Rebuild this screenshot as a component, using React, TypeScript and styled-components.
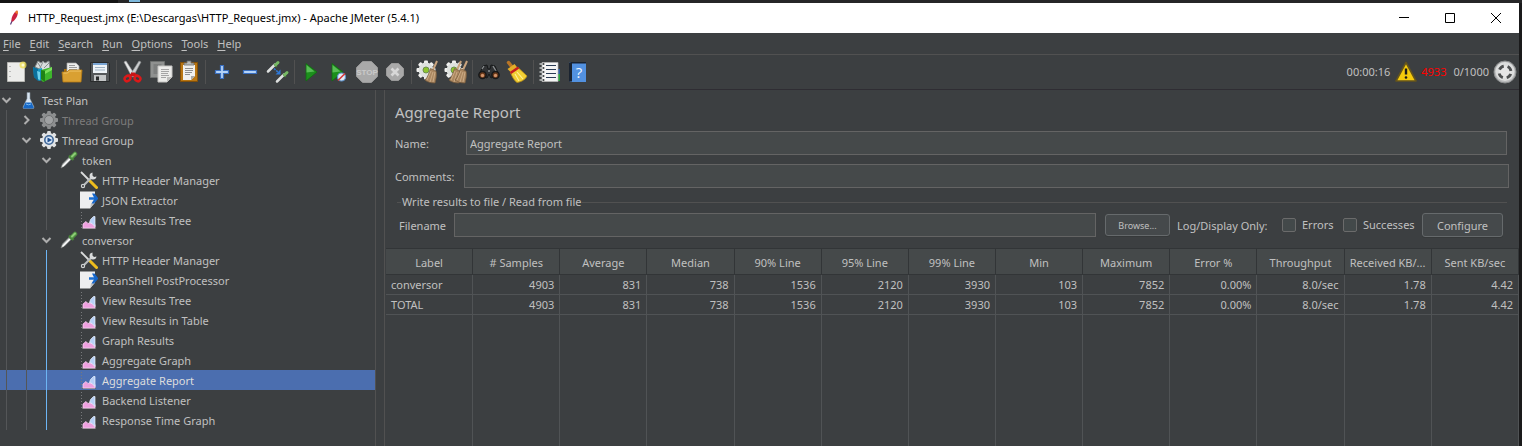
import React from "react";
import styled, { createGlobalStyle } from "styled-components";

const GlobalStyle = createGlobalStyle`
  *, *::before, *::after { box-sizing: border-box; }
  body { margin: 0; background: #1a1a1b; }
  body, button, input, table { font-family: "Noto Sans", "Open Sans", sans-serif; font-size: 11px; }
  button, input { color: inherit; }
`;

const Desktop = styled.div`
  display: flex;
  flex-direction: column;
  min-height: 100vh;
  padding-right: 3px;
  color: #c0c0c0;
  line-height: 16px;
`;

const Backdrop = styled.div`
  display: flex;
  height: 3px;
  margin-right: -3px;
  background: #262627;
`;
const BackdropDark = styled.div`
  width: 118px;
  margin-right: 11px;
  background: #141414;
`;
const BackdropIcon = styled.div`
  width: 11px;
  height: 2px;
  background: #7db8dc;
`;

const Window = styled.div`
  flex: 1;
  display: flex;
  flex-direction: column;
  background: #3c3f41;
`;

const TitleBar = styled.header`
  display: flex;
  align-items: center;
  height: 30px;
  padding-left: 6px;
  gap: 4px;
  background: #ffffff;
  color: #000000;
`;
const WindowTitle = styled.div`
  flex: 1;
  white-space: nowrap;
`;
const WindowControls = styled.div`
  display: flex;
`;
const WindowButton = styled.button`
  display: flex;
  align-items: center;
  justify-content: center;
  width: 46px;
  height: 30px;
  padding: 0;
  border: 0;
  background: none;
`;

const MenuBar = styled.nav`
  display: flex;
  align-items: center;
  height: 22px;
  gap: 9px;
  padding: 0 3px;
  border-bottom: 1px solid #515151;
`;
const MenuItem = styled.button`
  padding: 0;
  border: 0;
  background: none;
  line-height: 16px;
  u { text-underline-offset: 2px; }
`;

const Toolbar = styled.div`
  display: flex;
  align-items: center;
  height: 35px;
  padding: 0 2px;
  border-bottom: 1px solid #2f2d33;
`;
const ToolButton = styled.button`
  display: flex;
  justify-content: center;
  width: 28px;
  padding: 0;
  border: 0;
  background: none;
`;
const Separator = styled.div`
  width: 1px;
  height: 24px;
  margin: 0 2px;
  background: #515151;
`;
const Status = styled.div`
  display: flex;
  align-items: center;
  gap: 4px;
  margin-left: auto;
`;
const ErrorCount = styled.span`
  color: #ff0000;
  margin: 0 3px 0 -1px;
`;

const Workspace = styled.div`
  flex: 1;
  display: flex;
`;

const Tree = styled.div`
  width: 376px;
  flex: none;
  border-right: 1px solid #515151;
`;
const TreeRow = styled.div<{ $selected?: boolean; $disabled?: boolean }>`
  display: flex;
  align-items: center;
  height: 20px;
  background: ${(p) => (p.$selected ? "#4b6eaf" : "transparent")};
  color: ${(p) => (p.$disabled ? "#7c7c7c" : p.$selected ? "#dddddd" : "#c0c0c0")};
`;
const TreeLabel = styled.span`
  padding-top: 1px;
`;
const Guide = styled.span<{ $active?: boolean }>`
  align-self: stretch;
  width: 14px;
  margin-left: 6px;
  border-left: 1px solid ${(p) => (p.$active ? "#6db5f5" : "#545658")};
`;
const Twisty = styled.span`
  display: flex;
  width: 20px;
  padding-left: 1px;
`;
const TreeIcon = styled.span`
  display: flex;
  width: 22px;
`;

const Divider = styled.div`
  width: 9px;
  flex: none;
  border-right: 1px solid #515151;
`;

const Panel = styled.main`
  flex: 1;
  min-width: 0;
  display: flex;
  flex-direction: column;
`;
const Heading = styled.h1`
  margin: 0;
  padding: 12px 10px 9px;
  font-size: 15px;
  line-height: 20px;
  font-weight: 400;
`;
const Field = styled.div<{ $inset: number }>`
  display: flex;
  align-items: center;
  height: 24px;
  margin: 0 ${(p) => p.$inset}px 9px 10px;
`;
const FieldLabel = styled.label<{ $width: number }>`
  flex: none;
  width: ${(p) => p.$width}px;
  padding-top: 1px;
`;
const TextInput = styled.input`
  flex: 1;
  min-width: 0;
  height: 24px;
  padding: 1px 3px 0;
  border: 1px solid #646464;
  border-radius: 0;
  background: #45494a;
  outline: 0;
`;
const FileGroup = styled.fieldset`
  min-width: 0;
  margin: -3px 12px 0;
  padding: 3px 4px 11px 2px;
  border: 0;
  border-top: 1px solid #515151;
`;
const FileLegend = styled.legend`
  margin-left: 2px;
  padding: 0 1px;
`;
const FileRow = styled.div`
  display: flex;
  align-items: center;
`;
const PushButton = styled.button<{ $small?: boolean }>`
  flex: none;
  width: ${(p) => (p.$small ? 65 : 81)}px;
  height: ${(p) => (p.$small ? 22 : 24)}px;
  margin-left: ${(p) => (p.$small ? 9 : 0)}px;
  padding: 1px 0 0;
  border: 1px solid #666a6c;
  border-radius: 3px;
  background: #45494b;
  box-shadow: 0 1px 0 #36393a;
  font-size: ${(p) => (p.$small ? 9 : 11)}px;
`;
const Caption = styled.span`
  flex: none;
  width: 94px;
  margin: 0 11px 0 7px;
  padding-top: 1px;
  white-space: nowrap;
`;
const CheckLabel = styled.label<{ $width: number }>`
  flex: none;
  display: flex;
  align-items: center;
  width: ${(p) => p.$width}px;
  gap: 6px;
`;
const CheckBox = styled.input`
  appearance: none;
  width: 14px;
  height: 14px;
  margin: 0;
  border: 1px solid #6b6b6b;
  border-radius: 2px;
  background: #43494a;
`;

const TableArea = styled.div`
  flex: 1;
  display: grid;
  padding-left: 1px;
`;
const Table = styled.table`
  width: 100%;
  table-layout: fixed;
  border-collapse: separate;
  border-spacing: 0;
  border-top: 1px solid #323537;
`;
const HeadCell = styled.th`
  height: 26px;
  padding: 2px 3px 0;
  white-space: nowrap;
  font-weight: 400;
  background: #45494a;
  border-right: 1px solid #323537;
  border-bottom: 1px solid #323537;
`;
const Cell = styled.td`
  height: 20px;
  padding: 1px 5px 0;
  text-align: right;
  border-right: 1px solid #505355;
  border-bottom: 1px solid #505355;
  &:first-child { text-align: left; }
`;
const FillCell = styled.td`
  border-right: 1px solid #505355;
`;

const Svg = ({ size = 24, children }: { size?: number; children: React.ReactNode }) => (
  <svg width={size} height={size} viewBox={`0 0 ${size} ${size}`} aria-hidden="true">
    {children}
  </svg>
);

const Page = ({ x, y, dark }: { x: number; y: number; dark?: boolean }) => (
  <g transform={`translate(${x} ${y})`}>
    <path d="M0 0h14v11l-5 5H0z" fill={dark ? "#8f9190" : "#ececea"} stroke={dark ? "#6d706f" : "#c4c4c2"} />
    <path d="M9 16v-5h5z" fill={dark ? "#777" : "#bdbdbb"} />
    <path d="M3 3.5h8M3 5.5h8M3 7.5h7M3 9.5h8M3 11.5h5" stroke={dark ? "#6a6c6c" : "#a4a4a4"} />
  </g>
);

const Gear = ({ x, y, r, fill, tooth }: { x: number; y: number; r: number; fill: string; tooth: string }) => (
  <g transform={`translate(${x} ${y})`}>
    {[0, 45, 90, 135, 180, 225, 270, 315].map((a) => (
      <rect key={a} x={-r * 0.21} y={-r} width={r * 0.42} height={r / 2} rx="1" fill={tooth} transform={`rotate(${a})`} />
    ))}
    <circle r={r * 0.78} fill={fill} />
  </g>
);

const Broom = ({ x }: { x: number }) => (
  <g transform={`translate(${x} 0)`}>
    <path d="M21 1L17 10" stroke="#c9a47e" strokeWidth="2" />
    <path d="M14.500 8.500l5.500 2.500c1 4 0 8-1 12-4 0-8-1-10-3 3-3 4-7 5.500-11.500z" fill="#ab8760" stroke="#765a3c" strokeWidth=".7" />
    <path d="M15 11l-4 9M17 12l-3 10M19 12l-2 10" stroke="#d3b48e" strokeWidth=".8" />
  </g>
);

const Pipette = () => (
  <>
    <path d="M1 17l1.500-4 7-7 2 2-7 7z" fill="#c8cccb" stroke="#858a88" strokeWidth=".7" />
    <path d="M2.500 15.500L10 8" stroke="#fff" strokeWidth="1.200" />
    <path d="M9 4.500l4.500 4.500" stroke="#467c39" strokeWidth="2.400" />
    <path d="M11.500 6.500l3.500-3.500" stroke="#4d8c3f" strokeWidth="4.500" strokeLinecap="round" />
    <path d="M12 5.500L15 2.500" stroke="#8dcc77" strokeWidth="2" strokeLinecap="round" />
  </>
);

const Octagon = ({ r }: { r: number }) => (
  <path
    transform="translate(12 12)"
    d={`M${-r * 0.42} ${-r}h${r * 0.84}L${r} ${-r * 0.42}v${r * 0.84}L${r * 0.42} ${r}h${-r * 0.84}L${-r} ${r * 0.42}v${-r * 0.84}z`}
    fill="#a9a9a9"
    stroke="#999"
  />
);

const icons: Record<string, React.ReactNode> = {
  new: (
    <>
      <path d="M3.500 2.500h17v19h-17z" fill="#ececea" stroke="#b8b8b4" />
      <path d="M6 6v1M6 11v1M6 16v1" stroke="#aaa" strokeWidth="1.500" />
      <circle cx="19" cy="5" r="3.500" fill="#f0e04f" opacity=".75" />
      <circle cx="19" cy="5" r="1.500" fill="#fffbd0" />
    </>
  ),
  templates: (
    <>
      <path d="M3 7l3-6 3 2 2-2 2 2 4-2 1 7-6 3z" fill="#d9dddd" stroke="#85898a" />
      <path d="M6 3l3 5M11 2l-3 6M17 3l-5 5" stroke="#8b8f90" />
      <path d="M1 7l5 2 4-1v12l-3 1-5-4z" fill="#1698c4" />
      <path d="M1 7l5 2v12l-4-4z" fill="#0a6f9c" />
      <path d="M5 11l3 1v8l-2-1z" fill="#6dd0ed" />
      <path d="M9 10l11-3v11l-9 4-2-2z" fill="#3db62c" />
      <path d="M9 10l4 1v11l-4-3z" fill="#1f8215" />
      <path d="M13 11l7-4v3l-7 4z" fill="#7bdf5c" />
    </>
  ),
  open: (
    <>
      <path d="M4 9h16v11H4z" fill="#a56d0c" />
      <path d="M7 3h9l3 3v9H7z" fill="#eeeeec" stroke="#a8a8a8" strokeWidth=".7" />
      <path d="M9 5.500h6M9 7.500h8M9 9.500h8" stroke="#999" />
      <path d="M2 12h5l2-2h13l-1 12H3z" fill="#d9a032" stroke="#b77b12" strokeWidth=".8" />
      <path d="M3.500 13h4l2-2H21" stroke="#f0c468" fill="none" />
    </>
  ),
  save: (
    <>
      <path d="M2.500 2.500h18l1 1v18h-19z" fill="#55585a" stroke="#292b2c" />
      <path d="M5 3h14v10H5z" fill="#eef3f7" />
      <path d="M5 3h14v2H5z" fill="#79a5d4" />
      <path d="M7 7.500h10M7 10h10" stroke="#9eb1c2" />
      <path d="M6 15h12v6H6z" fill="#c4c6c7" />
      <path d="M8 16.500h3v4H8z" fill="#292b2c" />
    </>
  ),
  cut: (
    <>
      <path d="M3 2l2-1 9 14-3 2z" fill="#e5e6e6" stroke="#9a9c9d" strokeWidth=".6" />
      <path d="M20 2l-2-1-9 14 3 2z" fill="#cbcdce" stroke="#8c8e90" strokeWidth=".6" />
      <path d="M10 14l3 0 2 2M13 14l-5 2" stroke="#c91515" strokeWidth="3" />
      <ellipse cx="6.500" cy="18.500" rx="3" ry="2.500" fill="none" stroke="#dc1919" strokeWidth="2.500" transform="rotate(-35 6.500 18.500)" />
      <ellipse cx="16.500" cy="18.500" rx="3" ry="2.500" fill="none" stroke="#dc1919" strokeWidth="2.500" transform="rotate(35 16.500 18.500)" />
    </>
  ),
  copy: (
    <>
      <Page x={1.5} y={1.5} dark />
      <Page x={9} y={6} />
    </>
  ),
  paste: (
    <>
      <path d="M3.500 2.500h17v19h-17z" fill="#b97612" stroke="#82500a" />
      <path d="M6 5h12v11l-4 4H6z" fill="#f0f0ee" />
      <path d="M14 20v-4h4z" fill="#aaa" />
      <path d="M8 8.500h8M8 10.500h8M8 12.500h7M8 14.500h5" stroke="#8f8f8f" />
      <path d="M7 5V3h3V1h4v2h3v2z" fill="#b9bbb8" stroke="#686b69" strokeWidth=".8" />
    </>
  ),
  plus: <path d="M10.500 5.500h3v5h5v3h-5v5h-3v-5h-5v-3h5z" fill="#b4d3f7" stroke="#3a6fc0" strokeWidth="1.200" />,
  minus: <path d="M5.500 10.500h13v3h-13z" fill="#b4d3f7" stroke="#3a6fc0" strokeWidth="1.200" />,
  toggle: (
    <>
      {[[1, 0], [10, 10]].map(([x, y]) => (
        <g key={x} transform={`translate(${x} ${y})`}>
          <path d="M1 11.500l7-7" stroke="#dee1e0" strokeWidth="2.500" strokeLinecap="round" />
          <path d="M7 4l3 3" stroke="#436e36" strokeWidth="1.500" />
          <path d="M8.500 5l2.500-2.500" stroke="#76b864" strokeWidth="3" strokeLinecap="round" />
        </g>
      ))}
      <path d="M8 8.500l4.500 4" stroke="#2d78d8" strokeWidth="1.600" strokeDasharray="2 1" />
      <path d="M14.500 14.500v-5L9.500 14.500z" fill="#2d78d8" />
    </>
  ),
  play: (
    <>
      <path d="M7 3.500l11 8.500-11 9z" fill="#1c8f1c" stroke="#126912" strokeWidth=".8" />
      <path d="M7.500 5l8 6.500-8 1z" fill="#58bd55" />
    </>
  ),
  playNow: (
    <>
      <path d="M5 3.500L16 12 5 21z" fill="#1c8f1c" stroke="#126912" strokeWidth=".8" />
      <path d="M5.500 5l8 6.500-8 1z" fill="#58bd55" />
      <circle cx="14.500" cy="17" r="4" fill="#e3edf7" stroke="#5d91c9" strokeWidth="1.200" />
      <path d="M11 20.500l7-7" stroke="#d63939" strokeWidth="1.600" />
    </>
  ),
  stop: (
    <>
      <Octagon r={10.5} />
      <text x="12" y="15" fontSize="8" fontWeight="700" textAnchor="middle" fill="#c9c9c9" fontFamily="Liberation Sans, sans-serif">STOP</text>
    </>
  ),
  shutdown: (
    <>
      <Octagon r={8.5} />
      <path d="M8.500 8.500l7 7M15.500 8.500l-7 7" stroke="#d8d8d8" strokeWidth="2.600" />
    </>
  ),
  clear: (
    <>
      <Gear x={10} y={10} r={9.5} fill="#dfe2df" tooth="#f2f2f0" />
      <circle cx="10" cy="10" r="3" fill="#8fc52f" stroke="#6d8f4f" />
      <Broom x={0} />
    </>
  ),
  clearAll: (
    <>
      <Gear x={10} y={10} r={9.5} fill="#dfe2df" tooth="#f2f2f0" />
      <circle cx="10" cy="10" r="3" fill="#8fc52f" stroke="#6d8f4f" />
      <Broom x={-4} />
      <Broom x={2} />
    </>
  ),
  search: (
    <>
      <path d="M2 15l4-9 4-1 1 4h2l1-4 4 1 4 9-8 3-2-4-2 4z" fill="#303234" stroke="#17191a" />
      <path d="M5 9l2-3M16 6l3 5M11 11h2" stroke="#8b8f91" strokeWidth="1.300" />
      <circle cx="5.500" cy="15" r="3.600" fill="#673719" stroke="#16181a" strokeWidth="1.500" />
      <circle cx="18.500" cy="15" r="3.600" fill="#673719" stroke="#16181a" strokeWidth="1.500" />
      <circle cx="5.500" cy="15.500" r="1.700" fill="#d1936b" />
      <circle cx="18.500" cy="15.500" r="1.700" fill="#d1936b" />
    </>
  ),
  broom: (
    <>
      <path d="M3.500 2.500l4 5" stroke="#b87526" strokeWidth="3.500" strokeLinecap="round" />
      <path d="M2.500 9l7-5 4 5-7 4z" fill="#e3ae28" />
      <path d="M5.500 12.500L13 7.500l9 8.500c-2 4-6 6-10 6.500-3-2-5-6-6.500-10z" fill="#f2cf34" stroke="#b68b14" strokeWidth=".8" />
      <path d="M5.500 13L13.500 7.500" stroke="#c51d20" strokeWidth="2.600" />
      <path d="M10 14l4 7M12 12l6 7" stroke="#fff09a" strokeWidth="1.100" />
    </>
  ),
  functions: (
    <>
      <path d="M18 9h4v7h-4z" fill="#315fa2" />
      <path d="M18 14h4v7h-4z" fill="#2ca03d" />
      <path d="M4 2.500h16v19H4z" fill="#f5f5f5" stroke="#bababa" strokeWidth=".7" />
      <path d="M8 5.500h10M8 9.500h10M8 13.500h10M8 17.500h10" stroke="#2b3c54" strokeWidth="1.200" />
      {[4, 8, 12, 16, 20].map((y) => (
        <g key={y}>
          <path d={`M1.500 ${y}h4`} stroke="#cfd1d2" strokeWidth="1.400" />
          <circle cx="5.500" cy={y} r="1" fill="#3a3c3e" />
        </g>
      ))}
    </>
  ),
  help: (
    <>
      <path d="M3 3l2-1h15v20H5l-2-1z" fill="#5291e0" />
      <path d="M3 3l2-1h15v1.500H6v18H3z" fill="#1a2330" />
      <text x="13" y="18" fontSize="15" textAnchor="middle" fill="#eef6ff" fontFamily="Open Sans, sans-serif">?</text>
    </>
  ),
};

const toolGroups = [
  ["new", "templates", "open", "save"],
  ["cut", "copy", "paste"],
  ["plus", "minus", "toggle"],
  ["play", "playNow", "stop", "shutdown"],
  ["clear", "clearAll"],
  ["search", "broom"],
  ["functions", "help"],
];

const treeIcons: Record<string, React.ReactNode> = {
  plan: (
    <>
      <path d="M7 1.500h3v6l4 8.500q.3 1.500-1 1.500H4q-1.300 0-1-1.500l4-8.500z" fill="#d9e6f2" stroke="#7c8993" strokeWidth=".6" />
      <path d="M5.500 11.500h6l2.300 5q0 1-1.300 1h-8q-1.300 0-1.300-1z" fill="#1768c5" />
      <path d="M6 13q2.500 1.500 5 0" stroke="#7bbcf6" fill="none" />
    </>
  ),
  groupOff: (
    <>
      <Gear x={9} y={9} r={9} fill="#8d8f90" tooth="#8d8f90" />
      <circle cx="9" cy="9" r="4.500" fill="#a0a2a3" stroke="#707273" />
    </>
  ),
  group: (
    <>
      <Gear x={9} y={9} r={9} fill="#e2e4e5" tooth="#dfe1e2" />
      <circle cx="9" cy="9" r="4.200" fill="#d6e6f7" stroke="#3f6696" strokeWidth="1.600" />
      <path d="M7.500 6.500l4.500 2.500-4.500 2.500z" fill="#1d4e91" />
    </>
  ),
  sampler: <Pipette />,
  config: (
    <>
      <path d="M1 1l9 9" stroke="#dadcdd" strokeWidth="1.800" />
      <path d="M10 10l6.500 6.500" stroke="#edbc1d" strokeWidth="3" strokeLinecap="round" />
      <path d="M2.500 15.500L12 6" stroke="#b7bbbd" strokeWidth="2.200" />
      <path d="M12.500 1.500a3.500 3.500 0 1 0 4 4l-2.500.5-1.500-1.500z" fill="#d9dbdc" />
      <circle cx="3" cy="15" r="1.600" fill="#3c3f41" stroke="#d0d3d4" strokeWidth="1.200" />
    </>
  ),
  post: (
    <>
      <path d="M0 .5h15v11l-5 6H0z" fill="#eeeff0" />
      <path d="M10 17.500l1-5 4-1z" fill="#bfc1c2" />
      <path d="M9 7.500h6" stroke="#1c6fd0" strokeWidth="2.500" />
      <path d="M12 2.500l2.500 0 4 5-4.500 5-2.500 0 3-5z" fill="#1565c8" />
    </>
  ),
  listener: (
    <>
      <path d="M1.500 1v16" stroke="#77797b" strokeDasharray="1 2" />
      <path d="M2 17.500h14" stroke="#6b6d6f" />
      <path d="M3 17v-4l3-2.500L8 12.500l3-1 4 2v3.500z" fill="#eea0df" stroke="#f6cdef" strokeWidth=".8" />
      <path d="M9.500 11.500l1-3 3-3 1.500 0v10l-3-3z" fill="#b7d0f7" stroke="#eef4fd" strokeWidth=".7" />
    </>
  ),
};

type Node = { level: number; icon: string; label: string; open?: boolean; disabled?: boolean; selected?: boolean; active?: boolean };

const nodes: Node[] = [
  { level: 0, icon: "plan", label: "Test Plan", open: true },
  { level: 1, icon: "groupOff", label: "Thread Group", open: false, disabled: true },
  { level: 1, icon: "group", label: "Thread Group", open: true },
  { level: 2, icon: "sampler", label: "token", open: true },
  { level: 3, icon: "config", label: "HTTP Header Manager" },
  { level: 3, icon: "post", label: "JSON Extractor" },
  { level: 3, icon: "listener", label: "View Results Tree" },
  { level: 2, icon: "sampler", label: "conversor", open: true },
  { level: 3, icon: "config", label: "HTTP Header Manager", active: true },
  { level: 3, icon: "post", label: "BeanShell PostProcessor", active: true },
  { level: 3, icon: "listener", label: "View Results Tree", active: true },
  { level: 3, icon: "listener", label: "View Results in Table", active: true },
  { level: 3, icon: "listener", label: "Graph Results", active: true },
  { level: 3, icon: "listener", label: "Aggregate Graph", active: true },
  { level: 3, icon: "listener", label: "Aggregate Report", active: true, selected: true },
  { level: 3, icon: "listener", label: "Backend Listener", active: true },
  { level: 3, icon: "listener", label: "Response Time Graph", active: true },
];

const menus = ["File", "Edit", "Search", "Run", "Options", "Tools", "Help"];

const columns = [
  "Label", "# Samples", "Average", "Median", "90% Line", "95% Line", "99% Line",
  "Min", "Maximum", "Error %", "Throughput", "Received KB/...", "Sent KB/sec",
];
const rows = [
  ["conversor", "4903", "831", "738", "1536", "2120", "3930", "103", "7852", "0.00%", "8.0/sec", "1.78", "4.42"],
  ["TOTAL", "4903", "831", "738", "1536", "2120", "3930", "103", "7852", "0.00%", "8.0/sec", "1.78", "4.42"],
];

export default function App() {
  return (
    <Desktop>
      <GlobalStyle />
      <Backdrop>
        <BackdropDark />
        <BackdropIcon />
      </Backdrop>
      <Window>
        <TitleBar>
          <Svg size={18}>
            <path d="M4.500 15.500l2-4.500" stroke="#5b3a75" strokeWidth="1.200" />
            <path d="M5.500 12.500C5 9 7 4 11 1.500c2 2 0 8-4 11z" fill="#cb2140" />
            <path d="M9 3.500l2-2.200c1 .8 1 2.500.5 4z" fill="#ee7b28" />
          </Svg>
          <WindowTitle>HTTP_Request.jmx (E:\Descargas\HTTP_Request.jmx) - Apache JMeter (5.4.1)</WindowTitle>
          <WindowControls>
            <WindowButton aria-label="Minimize">
              <Svg size={12}><path d="M1 5.500h10" stroke="#000" /></Svg>
            </WindowButton>
            <WindowButton aria-label="Maximize">
              <Svg size={12}><path d="M1.500 1.500h9v9h-9z" stroke="#000" fill="none" /></Svg>
            </WindowButton>
            <WindowButton aria-label="Close">
              <Svg size={12}><path d="M1 1l10 10M11 1L1 11" stroke="#000" /></Svg>
            </WindowButton>
          </WindowControls>
        </TitleBar>
        <MenuBar>
          {menus.map((m) => (
            <MenuItem key={m}><u>{m[0]}</u>{m.slice(1)}</MenuItem>
          ))}
        </MenuBar>
        <Toolbar>
          {toolGroups.map((group, i) => (
            <React.Fragment key={i}>
              {i > 0 && <Separator />}
              {group.map((name) => (
                <ToolButton key={name} aria-label={name}>
                  <Svg>{icons[name]}</Svg>
                </ToolButton>
              ))}
            </React.Fragment>
          ))}
          <Status>
            <span>00:00:16</span>
            <Svg>
              <path d="M12 2.500L22 21H2z" fill="#f5cb0c" stroke="#64541c" strokeWidth="1.600" strokeLinejoin="round" />
              <path d="M12 8.500v6" stroke="#1b1b1b" strokeWidth="2.400" />
              <circle cx="12" cy="17.500" r="1.300" fill="#1b1b1b" />
            </Svg>
            <ErrorCount>4933</ErrorCount>
            <span>0/1000</span>
            <Svg>
              <circle cx="12" cy="12" r="11" fill="#b9babb" stroke="#8b8d8e" />
              <circle cx="12" cy="11.500" r="9.500" fill="#dcdddd" />
              <circle cx="12" cy="12" r="6" fill="#e6e6e6" stroke="#4d4f50" strokeWidth="2.800" strokeDasharray="5.400 4.025" strokeDashoffset="-2" />
            </Svg>
          </Status>
        </Toolbar>
        <Workspace>
          <Tree role="tree">
            {nodes.map((n, i) => (
              <TreeRow key={i} role="treeitem" aria-level={n.level + 1} aria-expanded={n.open} aria-selected={!!n.selected} $selected={n.selected} $disabled={n.disabled}>
                {Array.from({ length: n.level }, (_, g) => (
                  <Guide key={g} $active={n.active && g === 2} />
                ))}
                <Twisty>
                  {n.open !== undefined && (
                    <Svg size={12}>
                      <path d={n.open ? "M1.500 4l4 4 4-4" : "M3.500 2l4 4-4 4"} fill="none" stroke="#adadad" strokeWidth="2" />
                    </Svg>
                  )}
                </Twisty>
                <TreeIcon><Svg size={18}>{treeIcons[n.icon]}</Svg></TreeIcon>
                <TreeLabel>{n.label}</TreeLabel>
              </TreeRow>
            ))}
          </Tree>
          <Divider />
          <Panel>
            <Heading>Aggregate Report</Heading>
            <Field $inset={12}>
              <FieldLabel $width={71} htmlFor="name">Name:</FieldLabel>
              <TextInput id="name" defaultValue="Aggregate Report" />
            </Field>
            <Field $inset={10}>
              <FieldLabel $width={69} htmlFor="comments">Comments:</FieldLabel>
              <TextInput id="comments" />
            </Field>
            <FileGroup>
              <FileLegend>Write results to file / Read from file</FileLegend>
              <FileRow>
                <FieldLabel $width={55} htmlFor="filename">Filename</FieldLabel>
                <TextInput id="filename" />
                <PushButton $small>Browse...</PushButton>
                <Caption>Log/Display Only:</Caption>
                <CheckLabel $width={61}><CheckBox type="checkbox" />Errors</CheckLabel>
                <CheckLabel $width={79}><CheckBox type="checkbox" />Successes</CheckLabel>
                <PushButton>Configure</PushButton>
              </FileRow>
            </FileGroup>
            <TableArea>
              <Table>
                <thead>
                  <tr>{columns.map((c) => <HeadCell key={c}>{c}</HeadCell>)}</tr>
                </thead>
                <tbody>
                  {rows.map((r) => (
                    <tr key={r[0]}>{r.map((v, i) => <Cell key={i}>{v}</Cell>)}</tr>
                  ))}
                  <tr>{columns.map((c) => <FillCell key={c} />)}</tr>
                </tbody>
              </Table>
            </TableArea>
          </Panel>
        </Workspace>
      </Window>
    </Desktop>
  );
}
